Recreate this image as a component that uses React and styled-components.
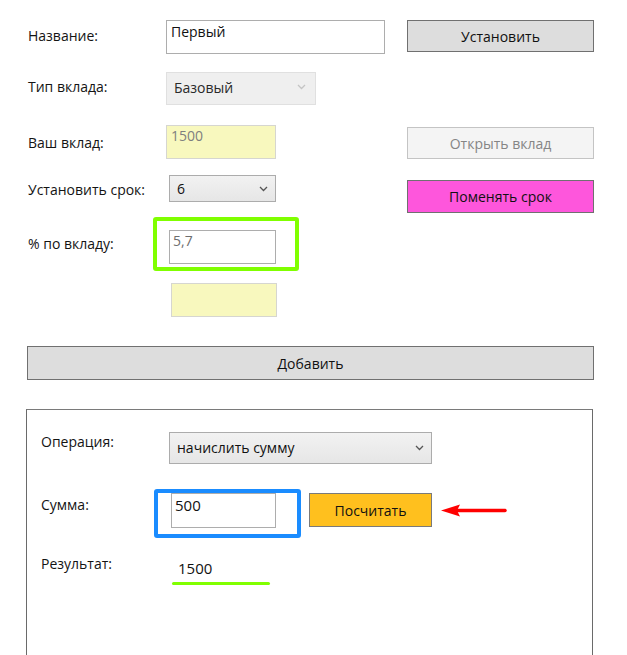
import React from "react";
import styled, { createGlobalStyle } from "styled-components";

const GlobalStyle = createGlobalStyle`
  html, body { margin: 0; padding: 0; overflow: hidden; background: #ffffff; }
  body {
    font-family: "Open Sans", "Noto Sans", "DejaVu Sans", sans-serif;
    font-size: 14px;
    color: #111111;
  }
  * { box-sizing: border-box; }
`;

const Page = styled.div`
  width: 627px;
  height: 655px;
  padding: 20px 33px 0 26px;
  display: flex;
  flex-direction: column;
`;

const Row = styled.div`
  display: grid;
  grid-template-columns: 140px 241px 187px;
  align-items: start;
  height: ${(p) => p.$h}px;
  margin-top: ${(p) => p.$mt || 0}px;
  flex: none;
`;

const Label = styled.div`
  padding-left: ${(p) => (p.$pl === undefined ? 2 : p.$pl)}px;
  margin-top: ${(p) => p.$mt || 0}px;
  line-height: 19px;
  white-space: nowrap;
  color: #141414;
`;

const Field = styled.input`
  display: block;
  width: ${(p) => p.$w}px;
  height: ${(p) => p.$h}px;
  margin: 0 0 0 ${(p) => p.$ml || 0}px;
  padding: ${(p) => p.$pt || 0}px 4px
    ${(p) => p.$h - 2 - (p.$pt || 0) - 19}px ${(p) => p.$pl || 4}px;
  line-height: 19px;
  font-family: inherit;
  font-size: ${(p) => p.$fs || 14}px;
  color: ${(p) => p.$color || "#111"};
  background: ${(p) => p.$bg || "#ffffff"};
  border: 1px solid ${(p) => p.$border || "#adadad"};
  border-radius: 0;
  outline: none;
`;

const SelectBox = styled.div`
  display: flex;
  align-items: center;
  justify-content: space-between;
  width: ${(p) => p.$w}px;
  height: ${(p) => p.$h}px;
  margin-left: ${(p) => p.$ml || 0}px;
  padding: 0 ${(p) => p.$pr || 7}px ${(p) => p.$pb || 0}px 7px;
  border: 1px solid ${(p) => (p.$disabled ? "#e0e0e0" : "#acacac")};
  background: ${(p) =>
    p.$disabled ? "#efefef" : "linear-gradient(#f2f2f2, #e6e6e6)"};
  color: ${(p) => (p.$disabled ? "#2a2a2a" : "#111")};
  line-height: 19px;
  white-space: nowrap;
`;

const Button = styled.button`
  display: block;
  width: 100%;
  height: ${(p) => p.$h}px;
  margin: ${(p) => p.$mt || 0}px 0 0 0;
  padding: 0;
  font-family: inherit;
  font-size: 14px;
  line-height: 19px;
  color: ${(p) => p.$color || "#111"};
  background: ${(p) => p.$bg || "#dddddd"};
  border: 1px solid ${(p) => p.$border || "#707070"};
  border-radius: 0;
  cursor: default;
`;

const Highlight = styled.div`
  width: ${(p) => p.$w}px;
  height: ${(p) => p.$h}px;
  margin-left: ${(p) => p.$ml || 0}px;
  padding: ${(p) => p.$pt || 0}px 0 0 ${(p) => p.$pl || 0}px;
  border: 4px solid ${(p) => p.$color};
  border-radius: 3px;
`;

const WideButton = styled(Button)`
  flex: none;
  margin: 29px 0 0 1px;
  width: calc(100% - 1px);
`;

const Panel = styled.section`
  flex: 1 0 auto;
  margin: 29px 1px 0 0;
  padding: 22px 0 0 14px;
  border: 1px solid #6a6a6a;
  border-top-color: #7a7a7a;
  border-bottom: none;
`;

const PanelRow = styled.div`
  display: grid;
  grid-template-columns: 128px 1fr;
  align-items: start;
  height: ${(p) => p.$h}px;
  margin-top: ${(p) => p.$mt || 0}px;
`;

const Controls = styled.div`
  display: flex;
  align-items: flex-start;
`;

const CalcButton = styled(Button)`
  width: 123px;
  margin: 4px 0 0 8px;
`;

const Arrow = styled.svg`
  display: block;
  margin: 14px 0 0 9px;
  flex: none;
`;

const Result = styled.div`
  position: relative;
  width: 98px;
  margin: 20px 0 0 3px;
  padding: 0 0 7px 6px;
  font-size: 15px;
  line-height: 20px;
  color: #111;
  &::after {
    content: "";
    position: absolute;
    left: 0;
    right: 0;
    bottom: 0;
    height: 3px;
    border-radius: 2px;
    background: #80ff00;
  }
`;

const Chevron = ({ color = "#555" }) => (
  <svg width="9" height="6" viewBox="0 0 9 6" aria-hidden="true">
    <polyline
      points="1,1 4.5,4.5 8,1"
      fill="none"
      stroke={color}
      strokeWidth="1.3"
    />
  </svg>
);

export default function App() {
  return (
    <>
      <GlobalStyle />
      <Page>
        <Row $h={34}>
          <Label $mt={6}>Название:</Label>
          <Field readOnly value="Первый" $w={219} $h={34} $pt={1} />
          <Button $h={32}>Установить</Button>
        </Row>

        <Row $h={33} $mt={18}>
          <Label $mt={5}>Тип вклада:</Label>
          <SelectBox $w={150} $h={33} $disabled $pr={9} $pb={3}>
            <span>Базовый</span>
            <Chevron color="#c4c4c4" />
          </SelectBox>
        </Row>

        <Row $h={34} $mt={20}>
          <Label $mt={8}>Ваш вклад:</Label>
          <Field
            readOnly
            value="1500"
            $w={110}
            $h={34}
            $pt={0}
            $bg="#f8f8be"
            $border="#d6d6d0"
            $color="#7f7f7f"
          />
          <Button $h={32} $mt={2} $bg="#f4f4f4" $border="#c4c4c4" $color="#858585">
            Открыть вклад
          </Button>
        </Row>

        <Row $h={38} $mt={16}>
          <Label $mt={5}>Установить срок:</Label>
          <SelectBox $w={107} $h={27} $ml={3}>
            <span>6</span>
            <Chevron />
          </SelectBox>
          <Button $h={33} $mt={5} $bg="#fe56dc">
            Поменять срок
          </Button>
        </Row>

        <Row $h={54} $mt={4}>
          <Label $mt={17}>% по вкладу:</Label>
          <Highlight $w={146} $h={54} $ml={-13} $pt={9} $pl={12} $color="#80ff00">
            <Field
              readOnly
              value="5,7"
              $w={107}
              $h={34}
              $pt={0}
              $pl={3}
              $color="#6e6e6e"
            />
          </Highlight>
        </Row>

        <Row $h={34} $mt={12}>
          <span />
          <Field
            readOnly
            value=""
            $w={106}
            $h={34}
            $ml={5}
            $bg="#f8f8be"
            $border="#d6d6d0"
          />
        </Row>

        <WideButton $h={34}>Добавить</WideButton>

        <Panel>
          <PanelRow $h={32}>
            <Label $pl={0}>Операция:</Label>
            <SelectBox $w={263} $h={32} $pb={1}>
              <span>начислить сумму</span>
              <Chevron />
            </SelectBox>
          </PanelRow>

          <PanelRow $h={49} $mt={25}>
            <Label $pl={0} $mt={6}>Сумма:</Label>
            <Controls>
              <Highlight $w={147} $h={49} $ml={-15} $pl={13} $color="#1a8cff">
                <Field readOnly value="500" $w={105} $h={35} $pt={1} $pl={3} $fs={15} />
              </Highlight>
              <CalcButton $h={34} $bg="#ffc01e" $border="#7a7a7a">
                Посчитать
              </CalcButton>
              <Arrow width="66" height="14" viewBox="0 0 66 14" aria-hidden="true">
                <line
                  x1="15"
                  y1="7.5"
                  x2="64"
                  y2="7.5"
                  stroke="#ff0000"
                  strokeWidth="3.5"
                  strokeLinecap="round"
                />
                <polygon points="0,7.5 19,1.5 16,7.5 19,13.5" fill="#ff0000" />
              </Arrow>
            </Controls>
          </PanelRow>

          <PanelRow $h={60}>
            <Label $pl={0} $mt={16}>Результат:</Label>
            <Result>1500</Result>
          </PanelRow>
        </Panel>
      </Page>
    </>
  );
}
